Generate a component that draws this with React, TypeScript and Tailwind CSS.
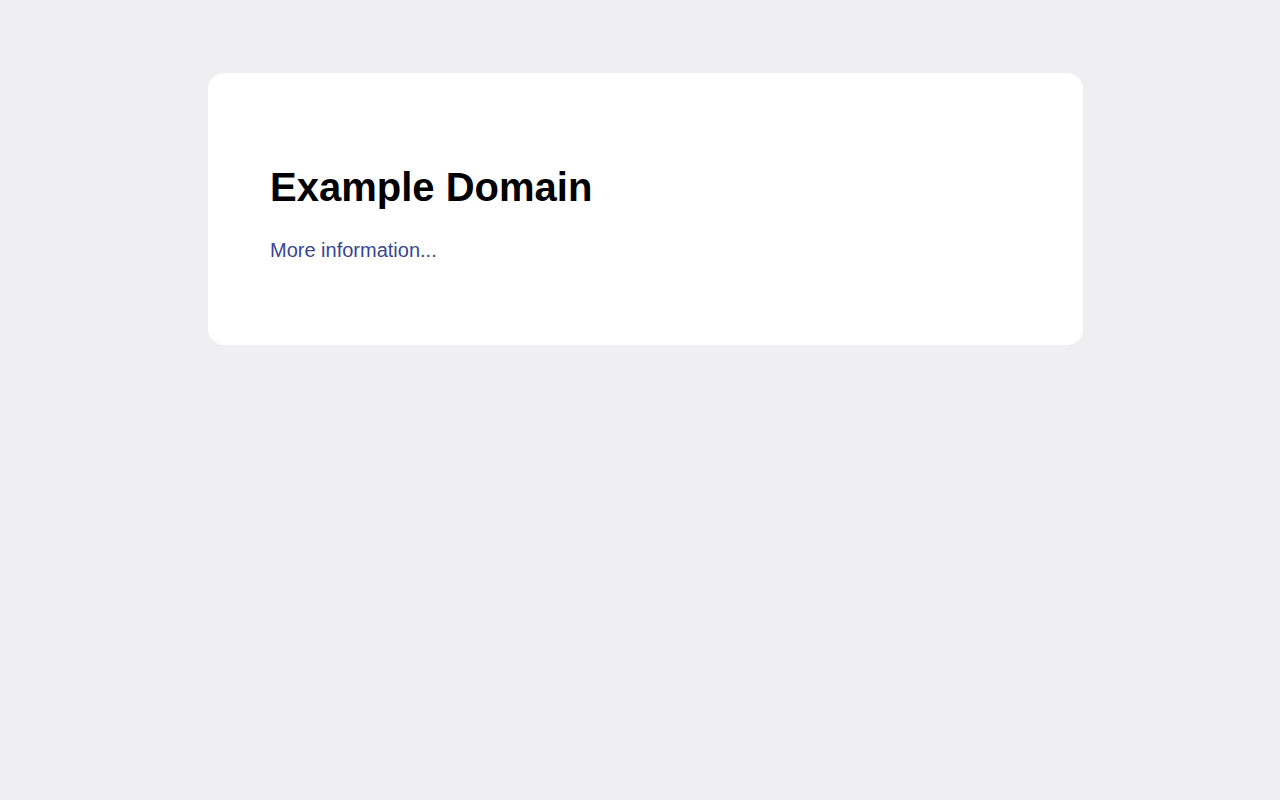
export default function App() {
  return (
    <div className="min-h-[800px] w-full bg-[#efeff1] pt-[73px]" style={{ fontFamily: '"Liberation Sans", Arial, Helvetica, sans-serif' }}>
      <div className="ml-[208px] w-[875px] h-[272px] rounded-[16px] bg-white pl-[62px] pr-[60px] pt-[91px]">
        <h1 className="text-[40px] font-bold leading-[46px] text-black">Example Domain</h1>
        <p className="mt-[29px] text-[20px] leading-[23px]">
          <a href="#" className="text-[#38488f] no-underline">More information...</a>
        </p>
      </div>
    </div>
  );
}
